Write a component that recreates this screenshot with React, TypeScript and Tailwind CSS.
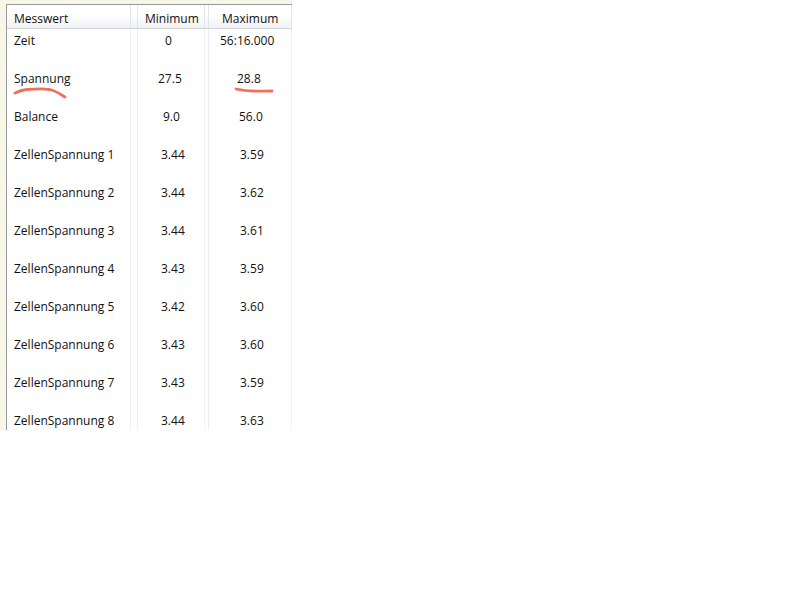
const rows: [string, string, string, string, string][] = [
  ["Zeit", "0", "pl-[27px]", "56:16.000", "pl-[11px]"],
  ["Spannung", "27.5", "pl-[20px]", "28.8", "pl-[28px]"],
  ["Balance", "9.0", "pl-[25px]", "56.0", "pl-[30px]"],
  ["ZellenSpannung 1", "3.44", "pl-[23px]", "3.59", "pl-[31px]"],
  ["ZellenSpannung 2", "3.44", "pl-[23px]", "3.62", "pl-[31px]"],
  ["ZellenSpannung 3", "3.44", "pl-[23px]", "3.61", "pl-[31px]"],
  ["ZellenSpannung 4", "3.43", "pl-[23px]", "3.59", "pl-[31px]"],
  ["ZellenSpannung 5", "3.42", "pl-[23px]", "3.60", "pl-[31px]"],
  ["ZellenSpannung 6", "3.43", "pl-[23px]", "3.60", "pl-[31px]"],
  ["ZellenSpannung 7", "3.43", "pl-[23px]", "3.59", "pl-[31px]"],
  ["ZellenSpannung 8", "3.44", "pl-[23px]", "3.63", "pl-[31px]"],
];

export default function App() {
  return (
    <div className="relative min-h-[600px] bg-white font-['Open_Sans','Liberation_Sans',sans-serif] text-[12px] text-[#111]">
      <div className="h-[430px] w-[292px] overflow-hidden bg-[#f8f6e6] pl-[6px] pt-[4px]">
        <div className="h-full border-l border-t border-[#9a9a9a] bg-white">
          <div className="flex h-[24px] border-b border-[#d5d5d8] bg-gradient-to-b from-white from-40% to-[#f1f2f5] leading-[27px]">
            <div className="w-[124px] border-r border-[#e3e5e8] pl-[7px]">Messwert</div>
            <div className="w-[7px] border-r border-[#e3e5e8]" />
            <div className="w-[67px] border-r border-[#e3e5e8] pl-[7px]">Minimum</div>
            <div className="w-[4px] border-r border-[#e3e5e8]" />
            <div className="w-[83px] border-r border-[#e3e5e8] pl-[13px]">Maximum</div>
          </div>
          {rows.map(([name, min, minPad, max, maxPad]) => (
            <div key={name} className="flex h-[38px] leading-[24px]">
              <div className="w-[124px] border-r border-[#e8eef5] pl-[7px]">{name}</div>
              <div className="w-[7px] border-r border-[#e8eef5]" />
              <div className={`w-[67px] border-r border-[#f0f2f5] ${minPad}`}>{min}</div>
              <div className="w-[4px] border-r border-[#e8eef5]" />
              <div className={`w-[83px] border-r border-[#f0f2f5] ${maxPad}`}>{max}</div>
            </div>
          ))}
        </div>
      </div>
      <svg className="absolute left-0 top-0" width="292" height="110" fill="none" stroke="#f0705e" strokeWidth="2.8" strokeLinecap="round" strokeLinejoin="round">
        <path d="M15 93 C19 91 23 90 27 89.5 C33 89 43 88.5 50 89.5 C55 90.5 60 94 65 97" />
        <path d="M236 89 C241 90 247 91 253 91 C259 91.5 266 91 272 91" />
      </svg>
    </div>
  );
}
